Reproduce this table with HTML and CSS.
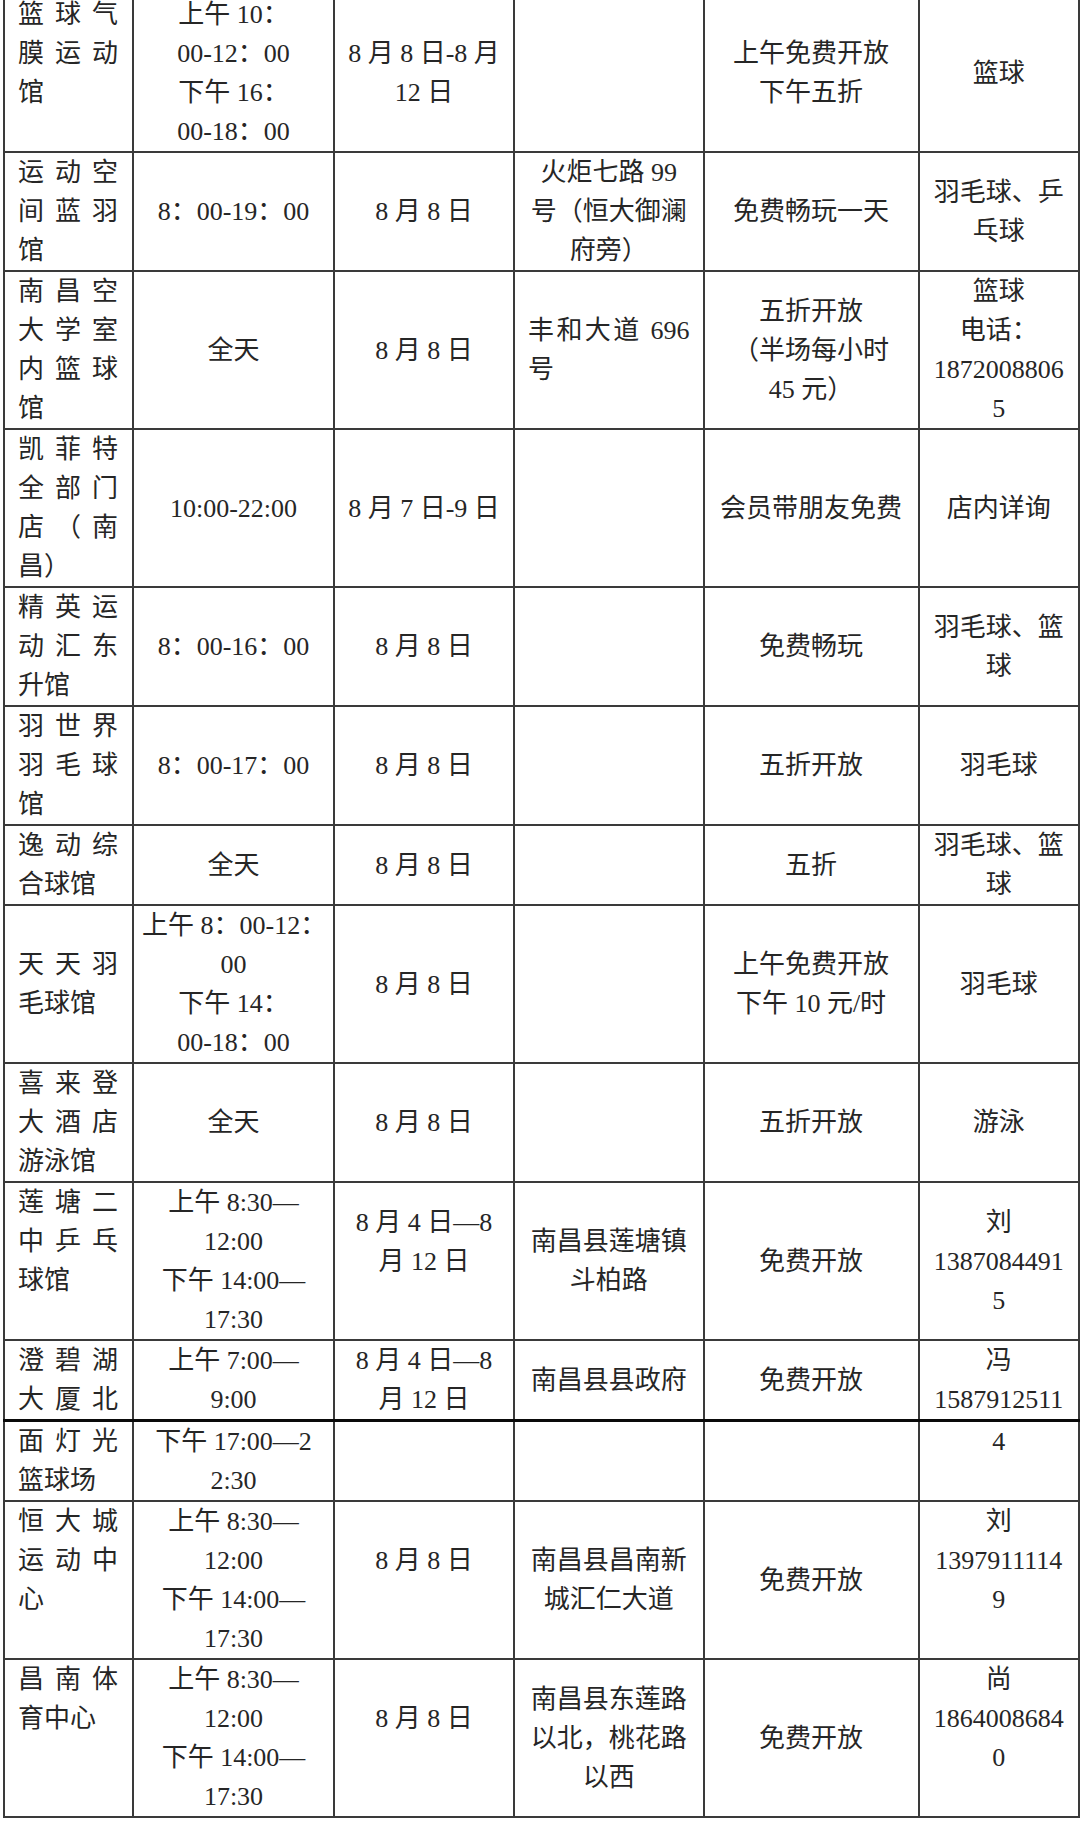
FILE: index.html
```html
<!DOCTYPE html>
<html lang="zh-CN">
<head>
<meta charset="utf-8">
<title>场馆开放表</title>
<link rel="stylesheet" href="styles.css">
</head>
<body>
<div class="page">
<table class="grid">
  <colgroup>
    <col class="c-name"><col class="c-time"><col class="c-date"><col class="c-addr"><col class="c-offer"><col class="c-sport">
  </colgroup>
  <tbody>
    <tr>
      <td class="name top">篮球气膜运动馆</td>
      <td class="time">上午 10：<br>00-12：00<br>下午 16：<br>00-18：00</td>
      <td class="fixed">8 月 8 日-8 月<br>12 日</td>
      <td></td>
      <td class="fixed">上午免费开放<br>下午五折</td>
      <td class="fixed">篮球</td>
    </tr>
    <tr>
      <td class="name top">运动空间蓝羽馆</td>
      <td class="time">8：00-19：00</td>
      <td class="fixed">8 月 8 日</td>
      <td class="fixed">火炬七路 99<br>号（恒大御澜<br>府旁）</td>
      <td class="fixed">免费畅玩一天</td>
      <td class="fixed">羽毛球、乒<br>乓球</td>
    </tr>
    <tr>
      <td class="name top">南昌空大学室内篮球馆</td>
      <td class="time">全天</td>
      <td class="fixed">8 月 8 日</td>
      <td class="just">丰和大道 696 号</td>
      <td class="fixed">五折开放<br>（半场每小时<br>45 元）</td>
      <td class="fixed">篮球<br>电话：<br>1872008806<br>5</td>
    </tr>
    <tr>
      <td class="name top">凯菲特全部门店（南昌）</td>
      <td class="time">10:00-22:00</td>
      <td class="fixed">8 月 7 日-9 日</td>
      <td></td>
      <td class="fixed">会员带朋友免费</td>
      <td class="fixed">店内详询</td>
    </tr>
    <tr>
      <td class="name top">精英运动汇东升馆</td>
      <td class="time">8：00-16：00</td>
      <td class="fixed">8 月 8 日</td>
      <td></td>
      <td class="fixed">免费畅玩</td>
      <td class="fixed">羽毛球、篮<br>球</td>
    </tr>
    <tr>
      <td class="name top">羽世界羽毛球馆</td>
      <td class="time">8：00-17：00</td>
      <td class="fixed">8 月 8 日</td>
      <td></td>
      <td class="fixed">五折开放</td>
      <td class="fixed">羽毛球</td>
    </tr>
    <tr>
      <td class="name top">逸动综合球馆</td>
      <td class="time">全天</td>
      <td class="fixed">8 月 8 日</td>
      <td></td>
      <td class="fixed">五折</td>
      <td class="fixed">羽毛球、篮<br>球</td>
    </tr>
    <tr>
      <td class="name">天天羽毛球馆</td>
      <td class="time">上午 8：00-12：<br>00<br>下午 14：<br>00-18：00</td>
      <td class="fixed">8 月 8 日</td>
      <td></td>
      <td class="fixed">上午免费开放<br>下午 10 元/时</td>
      <td class="fixed">羽毛球</td>
    </tr>
    <tr>
      <td class="name top">喜来登大酒店游泳馆</td>
      <td class="time">全天</td>
      <td class="fixed">8 月 8 日</td>
      <td></td>
      <td class="fixed">五折开放</td>
      <td class="fixed">游泳</td>
    </tr>
    <tr>
      <td class="name top">莲塘二中乒乓球馆</td>
      <td class="time">上午 8:30—<br>12:00<br>下午 14:00—<br>17:30</td>
      <td class="fixed lift">8 月 4 日—8<br>月 12 日</td>
      <td class="fixed">南昌县莲塘镇<br>斗柏路</td>
      <td class="fixed">免费开放</td>
      <td class="fixed">刘<br>1387084491<br>5</td>
    </tr>
    <tr class="page-break">
      <td class="name top full">澄碧湖大厦北</td>
      <td class="time">上午 7:00—<br>9:00</td>
      <td class="fixed">8 月 4 日—8<br>月 12 日</td>
      <td class="fixed">南昌县县政府</td>
      <td class="fixed">免费开放</td>
      <td class="fixed">冯<br>1587912511</td>
    </tr>
    <tr>
      <td class="name top">面灯光篮球场</td>
      <td class="time">下午 17:00—2<br>2:30</td>
      <td></td>
      <td></td>
      <td></td>
      <td class="fixed top">4</td>
    </tr>
    <tr>
      <td class="name top">恒大城运动中心</td>
      <td class="time">上午 8:30—<br>12:00<br>下午 14:00—<br>17:30</td>
      <td class="fixed lift">8 月 8 日</td>
      <td class="fixed">南昌县昌南新<br>城汇仁大道</td>
      <td class="fixed">免费开放</td>
      <td class="fixed top">刘<br>1397911114<br>9</td>
    </tr>
    <tr>
      <td class="name top">昌南体育中心</td>
      <td class="time">上午 8:30—<br>12:00<br>下午 14:00—<br>17:30</td>
      <td class="fixed lift">8 月 8 日</td>
      <td class="fixed">南昌县东莲路<br>以北，桃花路<br>以西</td>
      <td class="fixed">免费开放</td>
      <td class="fixed top">尚<br>1864008684<br>0</td>
    </tr>
  </tbody>
</table>
</div>
</body>
</html>
```

FILE: styles.css
```css
html, body {
  margin: 0;
  padding: 0;
  background: #ffffff;
}

body {
  font-family: "Liberation Serif", "Noto Sans CJK SC", serif;
  font-size: 26px;
  font-weight: 400;
  color: #262626;
}

.page {
  margin-top: -7px;
  padding-left: 3px;
  height: 1848px;
  overflow: hidden;
}

.grid {
  border-collapse: collapse;
  table-layout: fixed;
  width: 1075px;
}

.c-name  { width: 129px; }
.c-time  { width: 201px; }
.c-date  { width: 180px; }
.c-addr  { width: 189.5px; }
.c-offer { width: 215px; }
.c-sport { width: 160.5px; }

.grid td {
  border: 2px solid #3a3a3a;
  padding: 0 13px;
  line-height: 39px;
  text-align: center;
  vertical-align: middle;
}

.grid td.fixed {
  white-space: nowrap;
}

.grid td.name {
  padding: 0 14px 0 13px;
  text-align: justify;
}

.grid td.full {
  text-align-last: justify;
}

.grid td.time {
  padding: 0 8px;
  white-space: nowrap;
}

.grid td.just {
  text-align: justify;
}

.grid td.top {
  vertical-align: top;
}

.grid td.lift {
  padding-bottom: 39px;
}

.grid tr.page-break td {
  border-bottom: 3px solid #0a0a0a;
}
```
